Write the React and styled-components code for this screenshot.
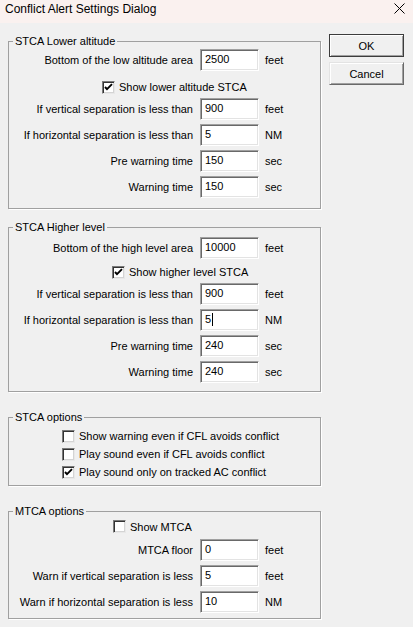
import React from "react";
import styled, { createGlobalStyle } from "styled-components";

const Global = createGlobalStyle`
  html, body { margin: 0; padding: 0; background: #f0f0f0; }
  body { font-family: "Liberation Sans", Arial, sans-serif; font-size: 11px; color: #000; }
  * { box-sizing: border-box; }
`;

const Window = styled.div`
  width: 413px;
  height: 627px;
  background: #f0f0f0;
  display: flex;
  flex-direction: column;
  overflow: hidden;
`;

const TitleBar = styled.div`
  height: 23px;
  flex: none;
  background: #faf1ef;
  display: flex;
  align-items: flex-start;
  justify-content: space-between;
  padding: 1px 8px 0 5px;
`;

const Title = styled.div`
  font-size: 12px;
  line-height: 16px;
  color: #000;
`;

const CloseIcon = styled.svg`
  width: 11px;
  height: 11px;
  margin-top: 2px;
`;

const Body = styled.div`
  display: flex;
  gap: 8px;
  padding: 11px 9px 0 8px;
`;

const Groups = styled.div`
  width: 313px;
  display: flex;
  flex-direction: column;
`;

const Group = styled.fieldset`
  margin: ${p => p.$mt || 0}px 0 0 0;
  padding: ${p => p.$pt}px 0 ${p => p.$pb}px 0;
  border: 1px solid #a0a0a0;
  border-radius: 0;
  min-width: 0;
  box-shadow: 1px 1px 0 #fff;
  display: flex;
  flex-direction: column;
`;

const Legend = styled.legend`
  margin-left: 4px;
  padding: 0 2px;
  font-size: 11px;
  line-height: 14px;
  height: 14px;
  color: #000;
`;

const FieldRow = styled.div`
  display: flex;
  align-items: center;
  height: 22px;
  margin-top: ${p => p.$mt}px;
`;

const Label = styled.div`
  width: 184px;
  text-align: right;
  margin-right: 7px;
  white-space: nowrap;
  line-height: 14px;
`;

const Field = styled.div`
  width: 59px;
  height: 22px;
  background: #fff;
  border-top: 1px solid #a0a0a0;
  border-left: 1px solid #a0a0a0;
  border-right: 1px solid #fff;
  border-bottom: 1px solid #fff;
  box-shadow: inset 1px 1px 0 #696969, inset -1px -1px 0 #e3e3e3;
  padding: 2px 4px 0 4px;
  line-height: 14px;
  white-space: nowrap;
`;

const Caret = styled.span`
  display: inline-block;
  width: 1px;
  height: 13px;
  background: #000;
  vertical-align: -3px;
  margin-left: 1px;
`;

const Unit = styled.div`
  margin-left: 6px;
  line-height: 14px;
`;

const CheckRow = styled.div`
  display: flex;
  align-items: ${p => p.$align || "center"};
  height: ${p => p.$h}px;
  padding-left: ${p => p.$indent}px;
  margin-top: ${p => p.$mt ?? 0}px;
`;

const CheckInner = styled.div`
  display: flex;
  align-items: center;
  gap: 4px;
  line-height: 14px;
`;

const Box = styled.span`
  width: 13px;
  height: 13px;
  flex: none;
  background: #fff;
  border-top: 1px solid #7a7a7a;
  border-left: 1px solid #7a7a7a;
  border-right: 1px solid #e8e8e8;
  border-bottom: 1px solid #e8e8e8;
  box-shadow: inset 1px 1px 0 #333, inset -1px -1px 0 #d4d4d4;
  display: flex;
  align-items: center;
  justify-content: center;
`;

const Buttons = styled.div`
  display: flex;
  flex-direction: column;
  gap: 5px;
`;

const Button = styled.div`
  width: 75px;
  height: 23px;
  display: flex;
  align-items: center;
  justify-content: center;
  background: #f0f0f0;
  line-height: 14px;
  border: 1px solid ${p => (p.$default ? "#3c3c3c" : "#adadad")};
  border-top-color: ${p => (p.$default ? "#3c3c3c" : "#e3e3e3")};
  border-left-color: ${p => (p.$default ? "#3c3c3c" : "#e3e3e3")};
  border-right-color: ${p => (p.$default ? "#3c3c3c" : "#696969")};
  border-bottom-color: ${p => (p.$default ? "#3c3c3c" : "#696969")};
  box-shadow: inset 1px 1px 0 #fff, inset -1px -1px 0 #a0a0a0;
`;

function Check({ checked, label }) {
  return (
    <CheckInner>
      <Box>
        {checked && (
          <svg width="9" height="9" viewBox="0 0 9 9">
            <path d="M1 4 L3 6.2 L8 1.2" fill="none" stroke="#000" strokeWidth="1.9" />
          </svg>
        )}
      </Box>
      <span>{label}</span>
    </CheckInner>
  );
}

function Row({ label, value, unit, caret, mt = 4 }) {
  return (
    <FieldRow $mt={mt}>
      <Label>{label}</Label>
      <Field>
        {value}
        {caret && <Caret />}
      </Field>
      <Unit>{unit}</Unit>
    </FieldRow>
  );
}

export default function App() {
  return (
    <>
      <Global />
      <Window>
        <TitleBar>
          <Title>Conflict Alert Settings Dialog</Title>
          <CloseIcon viewBox="0 0 11 11">
            <path d="M0.5 0.5 L10.5 10.5 M10.5 0.5 L0.5 10.5" stroke="#000" strokeWidth="1" fill="none" />
          </CloseIcon>
        </TitleBar>
        <Body>
          <Groups>
            <Group $pt={1} $pb={10}>
              <Legend>STCA Lower altitude</Legend>
              <Row label="Bottom of the low altitude area" value="2500" unit="feet" mt={0} />
              <CheckRow $h={19} $indent={93} $align="flex-end" $mt={4}>
                <Check checked label="Show lower altitude STCA" />
              </CheckRow>
              <Row label="If vertical separation is less than" value="900" unit="feet" />
              <Row label="If horizontal separation is less than" value="5" unit="NM" />
              <Row label="Pre warning time" value="150" unit="sec" />
              <Row label="Warning time" value="150" unit="sec" />
            </Group>

            <Group $mt={11} $pt={3} $pb={8}>
              <Legend>STCA Higher level</Legend>
              <Row label="Bottom of the high level area" value="10000" unit="feet" mt={0} />
              <CheckRow $h={16} $indent={103} $align="flex-end" $mt={4}>
                <Check checked label="Show higher level STCA" />
              </CheckRow>
              <Row label="If vertical separation is less than" value="900" unit="feet" />
              <Row label="If horizontal separation is less than" value="5" unit="NM" caret />
              <Row label="Pre warning time" value="240" unit="sec" />
              <Row label="Warning time" value="240" unit="sec" />
            </Group>

            <Group $mt={18} $pt={3} $pb={4}>
              <Legend>STCA options</Legend>
              <CheckRow $h={18} $indent={53}>
                <Check label="Show warning even if CFL avoids conflict" />
              </CheckRow>
              <CheckRow $h={18} $indent={53}>
                <Check label="Play sound even if CFL avoids conflict" />
              </CheckRow>
              <CheckRow $h={18} $indent={53}>
                <Check checked label="Play sound only on tracked AC conflict" />
              </CheckRow>
            </Group>

            <Group $mt={18} $pt={0} $pb={5}>
              <Legend>MTCA options</Legend>
              <CheckRow $h={17} $indent={104}>
                <Check label="Show MTCA" />
              </CheckRow>
              <Row label="MTCA floor" value="0" unit="feet" />
              <Row label="Warn if vertical separation is less" value="5" unit="feet" />
              <Row label="Warn if horizontal separation is less" value="10" unit="NM" />
            </Group>
          </Groups>
          <Buttons>
            <Button $default>OK</Button>
            <Button>Cancel</Button>
          </Buttons>
        </Body>
      </Window>
    </>
  );
}
